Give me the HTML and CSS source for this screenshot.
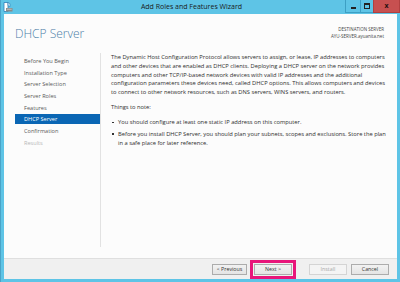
FILE: index.html
```html
<!DOCTYPE html>
<html lang="en">
<head>
    <meta charset="UTF-8">
    <title>Add Roles and Features Wizard</title>
    <link rel="stylesheet" href="styles.css">
</head>
<body>
    <div class="window">
        <div class="titlebar">
            <svg class="app-icon" width="10" height="10" viewBox="0 0 10 10">
                <path d="M1 0.5h4v9h-4z" fill="#ffffff" stroke="#2b7fb8" stroke-width="0.8"/>
                <path d="M5 0.5l2 1.2v3l-2 -1.2z" fill="#cfe7f5" stroke="#2b7fb8" stroke-width="0.6"/>
                <rect x="3" y="6" width="6.5" height="3.5" fill="#8a8a8a"/>
                <rect x="3.8" y="6.8" width="4.9" height="0.8" fill="#cfcfcf"/>
            </svg>
            <div class="title">Add Roles and Features Wizard</div>
            <div class="controls">
                <span class="ctl min"><i></i></span>
                <span class="ctl max"><i></i></span>
                <span class="ctl close">x</span>
            </div>
        </div>

        <div class="frame">
            <div class="header">
                <h1>DHCP Server</h1>
                <div class="dest">
                    <div>DESTINATION SERVER</div>
                    <div>AYU-SERVER.ayuanita.net</div>
                </div>
            </div>

            <div class="main">
                <ul class="steps">
                    <li>Before You Begin</li>
                    <li>Installation Type</li>
                    <li>Server Selection</li>
                    <li>Server Roles</li>
                    <li>Features</li>
                    <li class="active">DHCP Server</li>
                    <li>Confirmation</li>
                    <li class="disabled">Results</li>
                </ul>

                <div class="content">
                    <p>The Dynamic Host Configuration Protocol allows servers to assign, or lease, IP addresses to computers and other devices that are enabled as DHCP clients. Deploying a DHCP server on the network provides computers and other TCP/IP-based network devices with valid IP addresses and the additional configuration parameters these devices need, called DHCP options. This allows computers and devices to connect to other network resources, such as DNS servers, WINS servers, and routers.</p>
                    <p class="note">Things to note:</p>
                    <ul class="bullets">
                        <li>You should configure at least one static IP address on this computer.</li>
                        <li>Before you install DHCP Server, you should plan your subnets, scopes and exclusions. Store the plan in a safe place for later reference.</li>
                    </ul>
                </div>
            </div>

            <div class="footer">
                <button class="btn prev">&lt; Previous</button>
                <button class="btn next">Next &gt;</button>
                <button class="btn install" disabled>Install</button>
                <button class="btn">Cancel</button>
            </div>
        </div>
    </div>
</body>
</html>
```

FILE: styles.css
```css
body {
    margin: 0;
    padding: 0;
    background-color: #5ec4e6;
    font-family: "Open Sans", "Noto Sans", sans-serif;
    color: #333;
}
.window {
    height: 282px;
    display: flex;
    flex-direction: column;
    border-left: 1px solid #4aa3c8;
    box-sizing: border-box;
}

/* title bar */
.titlebar {
    height: 14px;
    display: flex;
    align-items: flex-start;
}
.app-icon {
    margin: 2px 0 0 2px;
}
.title {
    flex: 1;
    text-align: center;
    font-size: 7px;
    line-height: 13px;
    color: #1a1a1a;
    padding-left: 24px;
}
.controls {
    display: flex;
}
.ctl {
    height: 12px;
    border: 1px solid #3d9fc4;
    border-top: none;
    display: flex;
    align-items: center;
    justify-content: center;
    margin-left: -1px;
}
.min {
    width: 14px;
}
.min i {
    width: 5px;
    height: 2px;
    background: #222;
    margin-top: 4px;
}
.max {
    width: 12px;
}
.max i {
    width: 4px;
    height: 3px;
    border: 1px solid #222;
    border-top-width: 2px;
}
.close {
    width: 25px;
    background: #c75050;
    border-color: #b04040;
    font-size: 7px;
    font-weight: bold;
    color: #2a1010;
    line-height: 12px;
}

/* window body */
.frame {
    flex: 1;
    margin: 0 3px 3px 3px;
    background: #fcfcfc;
    display: flex;
    flex-direction: column;
}
.header {
    height: 38px;
    display: flex;
    justify-content: space-between;
    align-items: flex-start;
    padding: 0 13px 0 11px;
}
.header h1 {
    margin: 12px 0 0;
    font-size: 12px;
    font-weight: 300;
    line-height: 16px;
    color: #4d7fa8;
}
.dest {
    margin-top: 12px;
    font-size: 4.5px;
    line-height: 7px;
    text-align: right;
    color: #444;
}
.main {
    flex: 1;
    display: flex;
}
.steps {
    list-style: none;
    width: 85px;
    margin: 1px 0 11px;
    padding: 3px 0 0 11px;
    border-right: 1px solid #e2e2e2;
    display: flex;
    flex-direction: column;
    gap: 1.7px;
    font-size: 5.6px;
    color: #5a5a5a;
}
.steps li {
    line-height: 10px;
    padding-left: 9px;
}
.steps .active {
    background: #0a66b4;
    color: #fff;
}
.steps .disabled {
    color: #b8b8b8;
}
.content {
    flex: 1;
    padding: 1.3px 6px 0 10px;
    font-size: 5.75px;
    line-height: 8.7px;
    color: #2e2e2e;
}
.content p {
    margin: 0 0 5.7px;
}
.content .note {
    margin-bottom: 7px;
}
.bullets {
    list-style: none;
    margin: 0;
    padding: 0 3px 0 7px;
}
.bullets li {
    position: relative;
    margin-bottom: 3px;
}
.bullets li::before {
    content: "";
    position: absolute;
    left: -6px;
    top: 3.5px;
    width: 1.5px;
    height: 1.5px;
    background: #333;
}

/* buttons */
.footer {
    height: 20px;
    border-top: 1px solid #dfdfdf;
    background: #f0f0f0;
    display: flex;
    align-items: center;
    justify-content: flex-end;
    padding-right: 8px;
}
.btn {
    width: 38px;
    height: 11px;
    padding: 0;
    border: 1px solid #acacac;
    background: linear-gradient(#f2f2f2, #e4e4e4);
    font-family: "Open Sans", "Noto Sans", sans-serif;
    font-size: 5.3px;
    color: #333;
    margin-left: 4px;
}
.prev {
    width: 35px;
}
.next {
    margin-left: 7px;
    margin-right: 13px;
    outline: 3px solid #e8157a;
    outline-offset: 1px;
}
.install {
    background: #f4f4f4;
    border-color: #d4d4d4;
    color: #a8a8a8;
}
```
